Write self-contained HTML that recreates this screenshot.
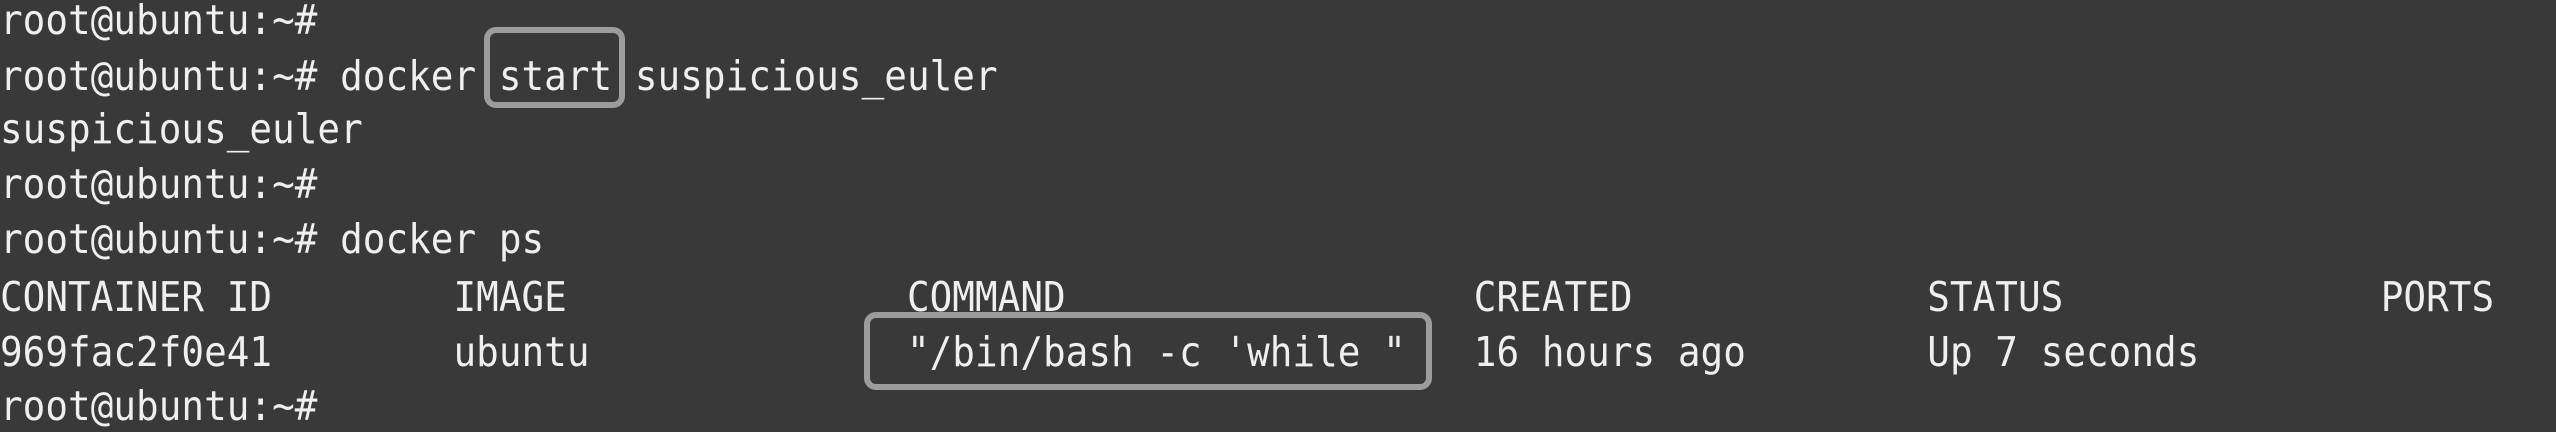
<!DOCTYPE html>
<html><head><style>
html,body{margin:0;padding:0;background:#393939;}
body{width:2556px;height:432px;position:relative;overflow:hidden;}
.l{position:absolute;left:0;font-family:"DejaVu Sans Mono","Liberation Mono",monospace;font-size:37.6px;letter-spacing:0.05px;color:#efefef;white-space:pre;line-height:1;transform:scaleY(1.1);transform-origin:0 50%;}
.box{position:absolute;border:6px solid #9c9c9c;border-radius:12px;box-sizing:border-box;}
</style></head><body>
<div class="l" style="top:2px">root@ubuntu:~#</div>
<div class="l" style="top:58px">root@ubuntu:~# docker start suspicious_euler</div>
<div class="l" style="top:111px">suspicious_euler</div>
<div class="l" style="top:166px">root@ubuntu:~#</div>
<div class="l" style="top:221px">root@ubuntu:~# docker ps</div>
<div class="l" style="top:279px">CONTAINER ID        IMAGE               COMMAND                  CREATED             STATUS              PORTS</div>
<div class="l" style="top:334px">969fac2f0e41        ubuntu              "/bin/bash -c 'while "   16 hours ago        Up 7 seconds</div>
<div class="l" style="top:388px">root@ubuntu:~#</div>
<div class="box" style="left:484px;top:27px;width:141px;height:81px"></div>
<div class="box" style="left:864px;top:312px;width:568px;height:78px"></div>
</body></html>
